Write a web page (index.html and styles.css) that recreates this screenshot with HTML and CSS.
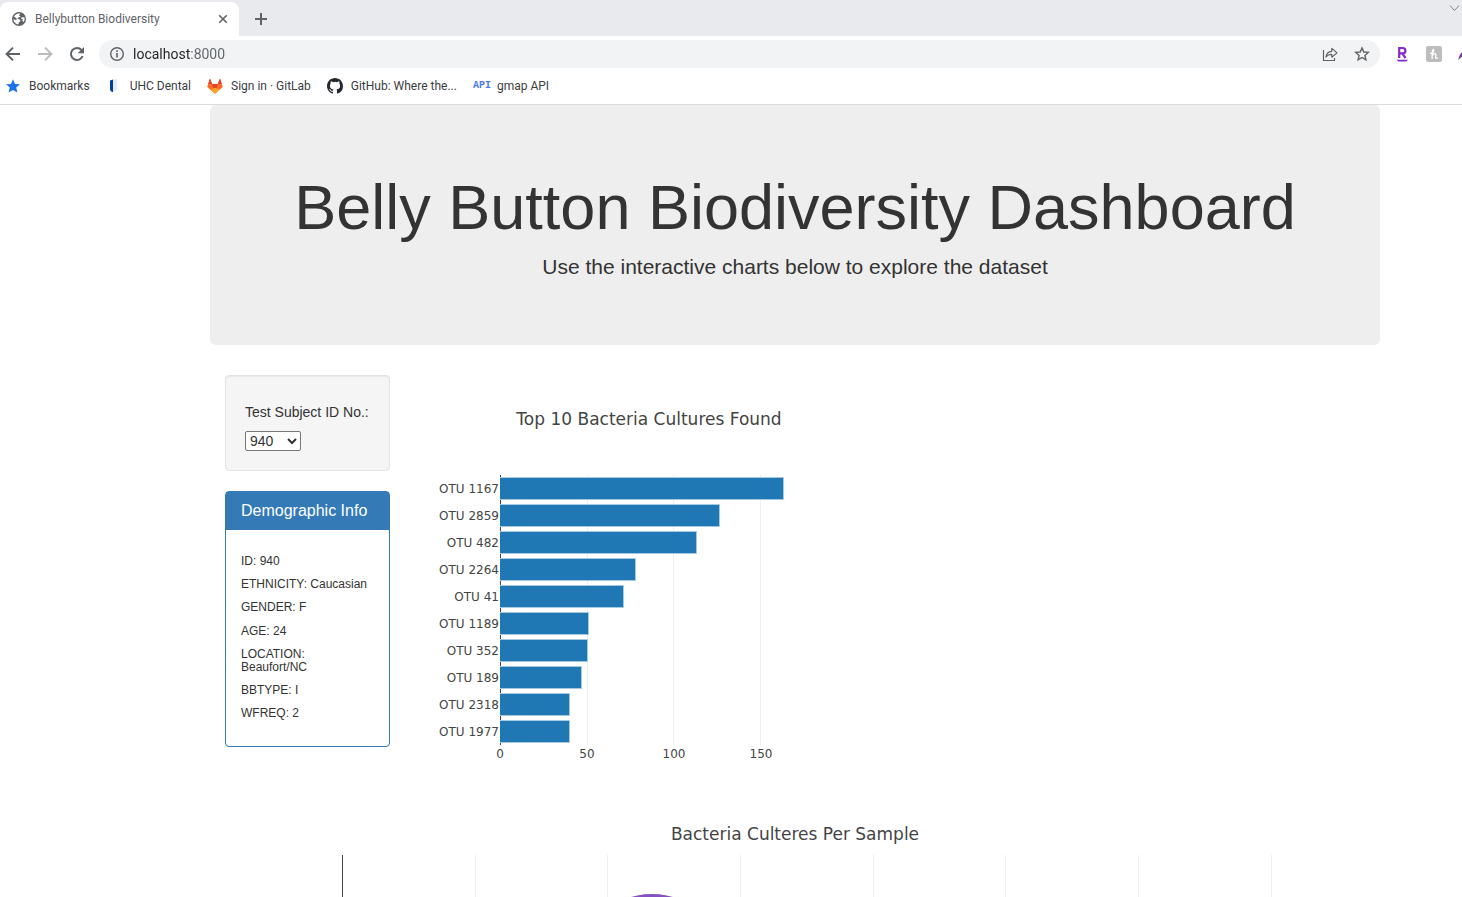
FILE: index.html
```html
<!DOCTYPE html>
<html lang="en">
<head>
<meta charset="utf-8">
<meta name="viewport" content="width=device-width, initial-scale=1">
<title>Bellybutton Biodiversity</title>
<link rel="stylesheet" href="styles.css">
</head>
<body>
<header class="browser">
  <div class="tabstrip">
    <div class="tab">
      <svg class="icon" viewBox="0 0 16 16" aria-hidden="true"><circle cx="8" cy="8" r="7" fill="#5f6368"/><path d="M3 5.5C4.5 2.6 7.4 2 9.3 2.7L8 4.6 9.7 5.4 7.5 6.6 6.3 8.1 8.9 8.5 9.4 10.2 7.9 11.4 7.3 13.6C4.7 13.2 2.6 11 2.4 8.2L5 9 6 8 4.4 6.5Z" fill="#fff"/><path d="M10.2 6.4L13.4 6.2Q14.2 8.8 12.5 11L11.2 9.7 12 8.2 10.1 7.7Z" fill="#fff"/></svg>
      <span class="tab-title">Bellybutton Biodiversity</span>
      <button class="icon-btn" aria-label="Close tab"><svg class="icon" viewBox="0 0 16 16"><path d="M4.2 4.2l7.6 7.6M11.8 4.2l-7.6 7.6" stroke="#5f6368" stroke-width="1.6"/></svg></button>
    </div>
    <button class="icon-btn new-tab" aria-label="New tab"><svg class="icon" viewBox="0 0 16 16"><path d="M8 2v12M2 8h12" stroke="#5f6368" stroke-width="2"/></svg></button>
    <button class="icon-btn tab-search" aria-label="Search tabs"><svg class="icon" viewBox="0 0 16 16"><path d="M4 3.5l4.5 5 4.5-5" fill="none" stroke="#80868b"/></svg></button>
  </div>
  <div class="toolbar">
    <nav class="nav-buttons" aria-label="History">
      <button class="icon-btn" aria-label="Back"><svg class="icon" viewBox="0 0 16 16"><path d="M15 8H2M8 1.6L1.6 8 8 14.4" fill="none" stroke="#5f6368" stroke-width="2"/></svg></button>
      <button class="icon-btn" aria-label="Forward" disabled><svg class="icon" viewBox="0 0 16 16"><path d="M1 8h13M8 1.6L14.4 8 8 14.4" fill="none" stroke="#babcbe" stroke-width="2"/></svg></button>
      <button class="icon-btn" aria-label="Reload"><svg class="icon" viewBox="0 0 16 16"><path d="M13.6 10A6 6 0 1 1 12.5 4" fill="none" stroke="#5f6368" stroke-width="2"/><path d="M15 1v6.3H8.7Z" fill="#5f6368"/></svg></button>
    </nav>
    <div class="omnibox">
      <svg class="icon" viewBox="0 0 16 16" aria-hidden="true"><circle cx="8" cy="8" r="6.3" fill="none" stroke="#5f6368" stroke-width="1.4"/><path d="M8 7v4.5M8 4.3v1.7" stroke="#5f6368" stroke-width="1.6"/></svg>
      <input class="address" type="text" value="localhost:8000" aria-label="Address">
      <button class="icon-btn" aria-label="Share"><svg class="icon" viewBox="0 0 16 16"><path d="M1.5 4v10.5h11V12" fill="none" stroke="#5f6368" stroke-width="1.2"/><path d="M4 11C4.4 7.4 6.3 5.5 9.8 5.3V2.4L15 6.9 9.8 11.2V8.4C7.3 8.3 5.5 9 4 11Z" fill="none" stroke="#5f6368" stroke-width="1.2" stroke-linejoin="round"/></svg></button>
      <button class="icon-btn" aria-label="Bookmark this page"><svg class="icon" viewBox="0 0 16 16"><path d="M8 1.9L9.8 6l4.5.4-3.4 3 1 4.4L8 11.5l-3.9 2.3 1-4.4-3.4-3L6.2 6Z" fill="none" stroke="#5f6368" stroke-width="1.4"/></svg></button>
    </div>
    <div class="extensions">
      <button class="icon-btn" aria-label="Rakuten"><svg class="icon" viewBox="0 0 16 16"><path d="M5.2 12V2H8.7a2.6 2.6 0 0 1 0 5.4H5.2M8.2 7.4L11.6 12" fill="none" stroke="#8529cd" stroke-width="2.2"/><path d="M2.4 13.7H14L12.2 15.4H4.4Z" fill="#8529cd"/></svg></button>
      <button class="icon-btn" aria-label="Honey"><svg class="icon" viewBox="0 0 16 16"><rect width="16" height="16" rx="2" fill="#bdbdbd"/><path d="M6.2 13C6 9 6 5.4 7.2 3.4 8.6 4.4 7 7.4 4 7.4M6.3 10C7 7.4 9.9 6.6 9.9 8.8L9.6 11.5Q10 13.2 12 11.6" fill="none" stroke="#fff" stroke-width="1.3"/></svg></button>
      <button class="icon-btn clipped" aria-label="Highlighter"><svg class="icon" viewBox="0 0 16 16"><path d="M0 14L2 8.5 6 4 8 7 3 11.5Z" fill="#7b35a8"/></svg></button>
    </div>
  </div>
  <nav class="bookmarks" aria-label="Bookmarks bar">
    <a class="bookmark" href="#"><svg class="icon" viewBox="0 0 16 16"><path d="M8 1.3l2 4.6 5 .4-3.8 3.3 1.2 4.9L8 11.9l-4.4 2.6 1.2-4.9L1 6.3l5-.4Z" fill="#1a73e8"/></svg>Bookmarks</a>
    <a class="bookmark" href="#"><svg class="icon" viewBox="0 0 16 16"><path d="M4 2.5L7 1.5V14Q4 13.6 4 10.5Z" fill="#003da1"/><path d="M7 1.5L11 1V10.5Q10.7 13.5 7 14Z" fill="#e6edfa"/></svg>UHC Dental</a>
    <a class="bookmark" href="#"><svg class="icon" viewBox="0 0 16 16"><path d="M.2 9L3 .4 5.2 6h5.6L13 .4 15.8 9 8 15.7Z" fill="#fc6d26"/><path d="M3 .4L5.2 6H1.2ZM13 .4L14.8 6h-4ZM5.2 6h5.6L8 15.2Z" fill="#e24329"/><path d="M3.2 11.6L8 9.8l4.8 1.8L8 15.7Z" fill="#fca326"/></svg>Sign in · GitLab</a>
    <a class="bookmark" href="#"><svg class="icon" viewBox="0 0 16 16"><path d="M8 0C3.58 0 0 3.58 0 8c0 3.54 2.29 6.53 5.47 7.59.4.07.55-.17.55-.38 0-.19-.01-.82-.01-1.49-2.01.37-2.53-.49-2.69-.94-.09-.23-.48-.94-.82-1.13-.28-.15-.68-.52-.01-.53.63-.01 1.08.58 1.23.82.72 1.21 1.87.87 2.33.66.07-.52.28-.87.51-1.07-1.78-.2-3.64-.89-3.64-3.95 0-.87.31-1.59.82-2.15-.08-.2-.36-1.02.08-2.12 0 0 .67-.21 2.2.82a7.6 7.6 0 0 1 4 0c1.53-1.04 2.2-.82 2.2-.82.44 1.1.16 1.92.08 2.12.51.56.82 1.27.82 2.15 0 3.07-1.87 3.75-3.65 3.95.29.25.54.73.54 1.48 0 1.07-.01 1.93-.01 2.2 0 .21.15.46.55.38A8.01 8.01 0 0 0 16 8c0-4.42-3.58-8-8-8Z" fill="#24292f"/></svg>GitHub: Where the...</a>
    <a class="bookmark" href="#"><span class="api-icon">API</span>gmap API</a>
  </nav>
</header>

<main class="container">
  <section class="jumbotron">
    <h1>Belly Button Biodiversity Dashboard</h1>
    <p>Use the interactive charts below to explore the dataset</p>
  </section>

  <div class="row">
    <aside class="sidebar">
      <div class="well">
        <label for="subject">Test Subject ID No.:</label>
        <select id="subject"><option>940</option><option>941</option><option>943</option></select>
      </div>
      <section class="panel">
        <h3>Demographic Info</h3>
        <div class="panel-body">
          <p>ID: 940</p>
          <p>ETHNICITY: Caucasian</p>
          <p>GENDER: F</p>
          <p>AGE: 24</p>
          <p>LOCATION: Beaufort/NC</p>
          <p>BBTYPE: I</p>
          <p>WFREQ: 2</p>
        </div>
      </section>
    </aside>

    <svg class="bar-chart" viewBox="0 0 458 420" role="img" aria-label="Top 10 Bacteria Cultures Found">
      <text class="chart-title" x="229" y="50">Top 10 Bacteria Cultures Found</text>
      <path class="grid" d="M167.5 100V370M253.5 100V370M340.5 100V370"/>
      <path class="axis" d="M80.5 100V370"/>
      <g class="bars">
        <path d="M80 102.5H363.5v22H80"/>
        <path d="M80 129.5H299.5v22H80"/>
        <path d="M80 156.5H276.5v22H80"/>
        <path d="M80 183.5H215.5v22H80"/>
        <path d="M80 210.5H203.5v22H80"/>
        <path d="M80 237.5H168.5v22H80"/>
        <path d="M80 264.5H167.5v22H80"/>
        <path d="M80 291.5H161.5v22H80"/>
        <path d="M80 318.5H149.5v22H80"/>
        <path d="M80 345.5H149.5v22H80"/>
      </g>
      <g class="y-labels">
        <text x="79" y="118">OTU 1167</text>
        <text x="79" y="145">OTU 2859</text>
        <text x="79" y="172">OTU 482</text>
        <text x="79" y="199">OTU 2264</text>
        <text x="79" y="226">OTU 41</text>
        <text x="79" y="253">OTU 1189</text>
        <text x="79" y="280">OTU 352</text>
        <text x="79" y="307">OTU 189</text>
        <text x="79" y="334">OTU 2318</text>
        <text x="79" y="361">OTU 1977</text>
      </g>
      <g class="x-labels">
        <text x="80" y="383">0</text>
        <text x="167" y="383">50</text>
        <text x="254" y="383">100</text>
        <text x="341" y="383">150</text>
      </g>
    </svg>
  </div>

  <svg class="bubble-chart" viewBox="0 0 1140 450" role="img" aria-label="Bacteria Culteres Per Sample">
    <text class="chart-title" x="570" y="45">Bacteria Culteres Per Sample</text>
    <path class="grid" d="M250.5 60V390M382.5 60V390M515.5 60V390M648.5 60V390M780.5 60V390M913.5 60V390M1046.5 60V390"/>
    <path class="axis" d="M117.5 60V390"/>
    <circle cx="427" cy="174" r="75" fill="#8550bf"/>
  </svg>
</main>
</body>
</html>
```
FILE: styles.css
```css
* { box-sizing: border-box; }

body {
  margin: 0;
  height: 100vh;
  display: flex;
  flex-direction: column;
  overflow: hidden;
  background: #fff;
  color: #333;
  font: 14px/20px "Liberation Sans", Arial, sans-serif;
}

.icon { display: block; flex: none; width: 16px; height: 16px; }

.icon-btn {
  flex: none;
  padding: 0;
  border: 0;
  background: none;
}

/* Browser frame */
.browser {
  flex: none;
  border-bottom: 1px solid #dadce0;
  font-family: Roboto, "Noto Sans", sans-serif;
  font-size: 12px;
}

.tabstrip {
  display: flex;
  height: 36px;
  padding-top: 2px;
  background: #e8eaed;
}

.tab {
  display: flex;
  align-items: center;
  gap: 8px;
  width: 239px;
  padding: 0 8px 0 11px;
  border-radius: 8px 8px 0 0;
  background: #fff;
}

.tab-title { flex: 1; color: #5f6368; white-space: nowrap; }
.new-tab { padding-left: 14px; }
.tab-search { align-self: flex-start; margin-left: auto; }

.toolbar { display: flex; align-items: center; height: 36px; }

.nav-buttons { display: flex; gap: 16px; width: 99px; padding-left: 5px; }

.omnibox {
  display: flex;
  flex: 1;
  align-items: center;
  gap: 16px;
  height: 28px;
  padding: 0 10px;
  border-radius: 14px;
  background: #f1f3f4;
}

.address {
  flex: 1;
  margin-left: -8px;
  padding: 0;
  border: 0;
  outline: 0;
  background: linear-gradient(90deg, #202124 57px, #5f6368 57px);
  background-clip: text;
  -webkit-text-fill-color: transparent;
  font: 14px/20px Roboto, "Noto Sans", sans-serif;
}

.extensions {
  display: flex;
  gap: 16px;
  width: 82px;
  padding-left: 14px;
  overflow: hidden;
}

.bookmarks {
  display: flex;
  align-items: center;
  gap: 16px;
  height: 32px;
  padding: 0 5px 4px;
}

.bookmark {
  display: flex;
  align-items: center;
  gap: 8px;
  color: #3c4043;
  text-decoration: none;
  white-space: nowrap;
}

.api-icon {
  width: 16px;
  color: #4d7de0;
  font: bold 10px/16px "Liberation Mono", monospace;
}

/* Page */
.container { flex: 1; min-height: 0; margin: 0 82px 0 210px; overflow: hidden; }

.jumbotron {
  padding: 68px 60px 63px;
  margin-bottom: 30px;
  border-radius: 6px;
  background: #eee;
  text-align: center;
}

.jumbotron h1 {
  margin: 0 0 10px;
  font-size: 63px;
  font-weight: 400;
  line-height: 69px;
}

.jumbotron p { margin: 0; font-size: 21px; line-height: 30px; }

.row { display: flex; align-items: flex-start; gap: 30px; padding: 0 15px; }

.sidebar { display: flex; flex: none; flex-direction: column; gap: 20px; width: 165px; }

.well {
  display: flex;
  flex-direction: column;
  align-items: flex-start;
  gap: 9px;
  padding: 26px 19px 19px;
  border: 1px solid #e3e3e3;
  border-radius: 4px;
  background: #f5f5f5;
  box-shadow: inset 0 1px 1px rgba(0, 0, 0, .05);
}

.well select {
  width: 56px;
  height: 20px;
  padding: 0;
  border: 1px solid #767676;
  border-radius: 2px;
  background-color: #fff;
  color: #333;
  font: 14px/18px "Liberation Sans", Arial, sans-serif;
}

.panel { border: 1px solid #337ab7; border-radius: 4px; }

.panel h3 {
  margin: 0;
  padding: 10px 15px;
  background: #337ab7;
  color: #fff;
  font-size: 16px;
  font-weight: 400;
  line-height: 18px;
}

.panel-body {
  display: flex;
  flex-direction: column;
  gap: 10px;
  padding: 25px 15px;
  font-size: 12px;
  line-height: 1.1;
}

.panel-body p { margin: 0; }

/* Charts */
.bar-chart { display: block; width: 458px; height: 420px; }
.bubble-chart { display: block; width: calc(100% - 30px); margin: 0 15px; }

.bar-chart text,
.bubble-chart text {
  fill: #444;
  font-family: Verdana, "DejaVu Sans", sans-serif;
  font-size: 12px;
}

.bar-chart .chart-title,
.bubble-chart .chart-title { font-size: 17px; text-anchor: middle; }

.y-labels { text-anchor: end; }
.x-labels { text-anchor: middle; }
.grid { fill: none; stroke: #eee; }
.axis { fill: none; stroke: #444; }
.bars { fill: #1f77b4; stroke: #a5c9e1; }
```
